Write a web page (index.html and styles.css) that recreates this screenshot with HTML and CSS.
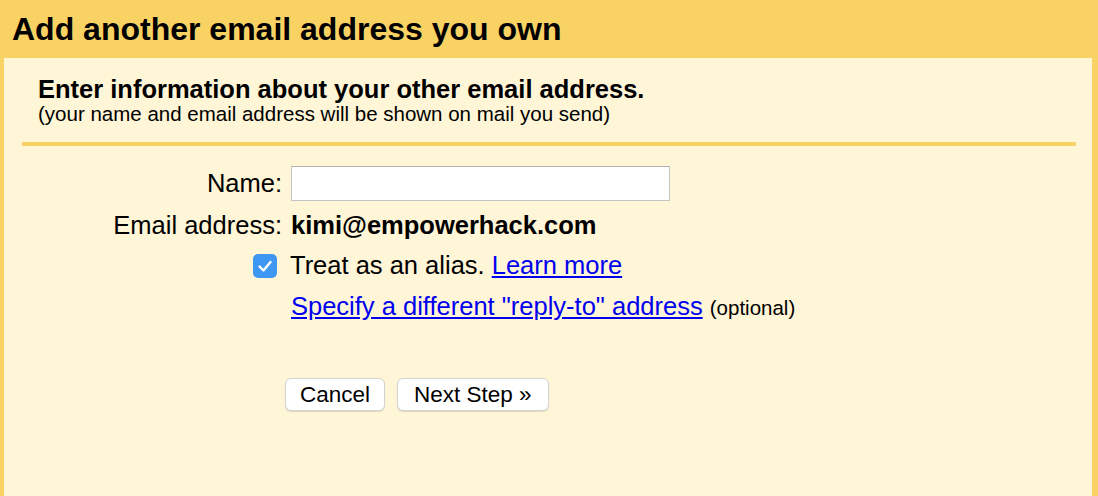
FILE: index.html
```html
<!DOCTYPE html>
<html>
<head>
<meta charset="utf-8">
<link rel="stylesheet" href="styles.css">
</head>
<body>
<div class="dialog">
  <div class="title-bar"><h1 class="title">Add another email address you own</h1></div>
  <div class="panel">
    <div class="intro">
      <div class="intro-head">Enter information about your other email address.</div>
      <div class="intro-sub">(your name and email address will be shown on mail you send)</div>
    </div>
    <div class="divider"></div>
    <div class="form">
      <label class="label" for="name">Name:</label>
      <div class="field"><input id="name" class="text-input" type="text"></div>
      <div class="label email-label">Email address:</div>
      <div class="field email">kimi@empowerhack.com</div>
      <div class="label"></div>
      <div class="field check-row">
        <span class="checkbox"><svg width="24" height="24" viewBox="0 0 24 24"><path d="M6.5 12.5 L10.5 16.5 L17.5 8" fill="none" stroke="#fff" stroke-width="2.4" stroke-linecap="round" stroke-linejoin="round"/></svg></span>
        <span>Treat as an alias. <a href="#" class="link">Learn more</a></span>
      </div>
      <div class="label"></div>
      <div class="field reply-row"><a href="#" class="link">Specify a different "reply-to" address</a> <span class="optional">(optional)</span></div>
      <div class="label"></div>
      <div class="field buttons">
        <button class="btn">Cancel</button>
        <button class="btn btn-next">Next Step »</button>
      </div>
    </div>
  </div>
</div>
</body>
</html>
```
FILE: styles.css
```css
* { box-sizing: border-box; }
html, body { margin: 0; padding: 0; }
body {
  font-family: "Liberation Sans", Arial, sans-serif;
  color: #000;
  background: #f9d264;
  width: 1098px;
  height: 496px;
  overflow: hidden;
}
.dialog {
  height: 496px;
  display: flex;
  flex-direction: column;
  background: #f9d264;
}
.title-bar {
  height: 58px;
  padding: 11px 0 0 12px;
}
.title {
  margin: 0;
  font-size: 32px;
  line-height: 36px;
  font-weight: bold;
}
.panel {
  flex: 1;
  margin: 0 6px 0 4px;
  background: #fff5d7;
  padding: 18px 18px 0 18px;
}
.intro { padding-left: 16px; }
.intro-head {
  font-size: 25.5px;
  font-weight: bold;
  line-height: 27px;
}
.intro-sub {
  font-size: 20.5px;
  line-height: 22px;
}
.divider {
  height: 4px;
  background: #f9d264;
  margin-top: 17px;
  margin-right: -2px;
}
.form {
  display: grid;
  grid-template-columns: 278px 1fr;
  column-gap: 9px;
  margin-left: -18px;
  margin-top: 20px;
  font-size: 25.5px;
}
.label {
  text-align: right;
  line-height: 35px;
}
.field { line-height: 35px; }
.text-input {
  display: block;
  width: 379px;
  height: 35px;
  border: 1px solid #c4c4c4;
  border-top-color: #b0b0b0;
  background: #fff;
  margin: 0;
  font: inherit;
}
.email {
  font-weight: bold;
  margin-top: 7px;
}
.email-label { margin-top: 7px; }
.check-row {
  display: flex;
  align-items: center;
  gap: 13px;
  margin-left: -38px;
  margin-top: 5px;
}
.checkbox {
  width: 24px;
  height: 24px;
  border-radius: 5px;
  background: #3d97f3;
  display: inline-flex;
}
.link { color: #0000ee; text-decoration: underline; }
.reply-row { margin-top: 6px; }
.optional { font-size: 20.5px; }
.buttons {
  display: flex;
  gap: 12px;
  margin-top: 53px;
  margin-left: -6px;
}
.btn {
  font-family: "Liberation Sans", Arial, sans-serif;
  font-size: 22.5px;
  height: 33px;
  padding: 0 14px;
  background: #fff;
  border: 1px solid #d2d2d2;
  border-radius: 6px;
  box-shadow: 0 1px 1px rgba(0,0,0,0.12);
  color: #000;
}
.btn-next { padding: 0 16px; }
```
